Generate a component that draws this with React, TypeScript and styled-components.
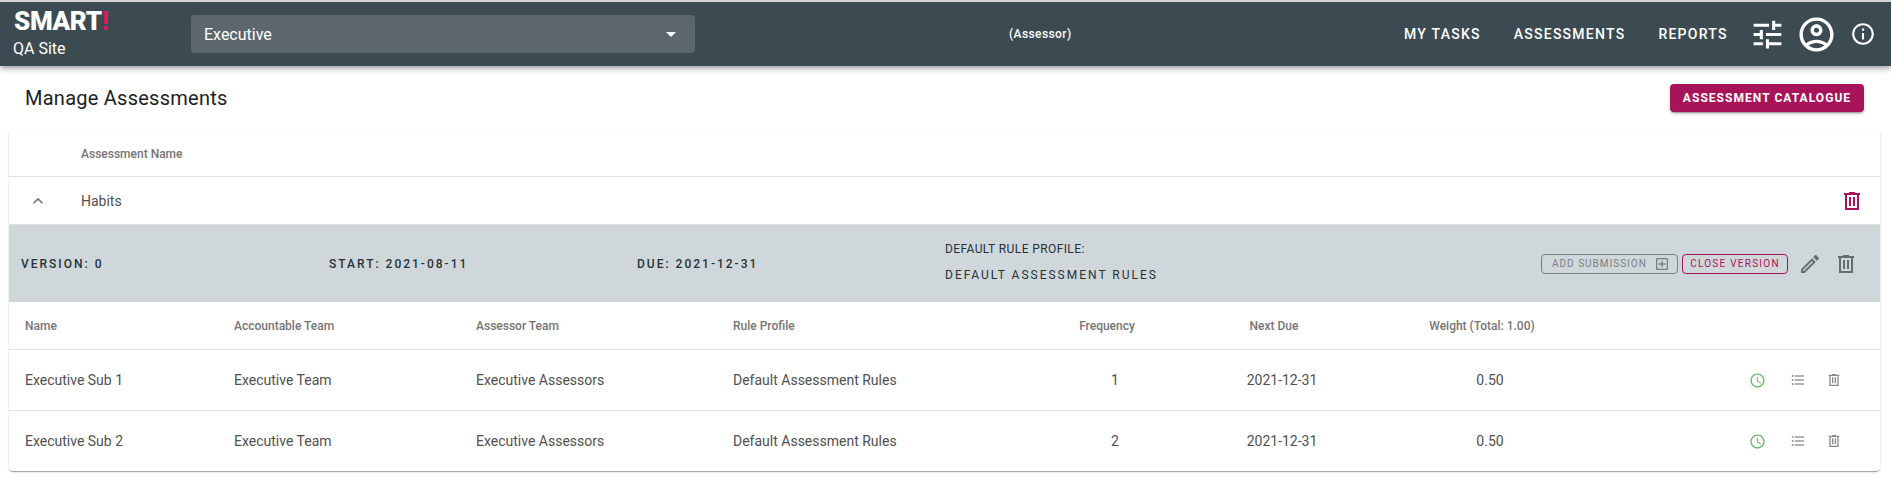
import styled, { createGlobalStyle } from "styled-components";

const GlobalStyle = createGlobalStyle`
  html, body {
    margin: 0;
    padding: 0;
    background: #fff;
    font-family: Roboto, "Liberation Sans", sans-serif;
  }
`;

const paths = {
  tune: "M3 17v2h6v-2H3zM3 5v2h10V5H3zm10 16v-2h8v-2h-8v-2h-2v6h2zM7 9v2H3v2h4v2h2V9H7zm14 4v-2H11v2h10zm-6-4h2V7h4V5h-4V3h-2v6z",
  account:
    "M12 2C6.48 2 2 6.48 2 12s4.48 10 10 10 10-4.48 10-10S17.52 2 12 2zM7.35 18.5C8.66 17.56 10.26 17 12 17s3.34.56 4.65 1.5c-1.31.94-2.91 1.5-4.65 1.5s-3.34-.56-4.65-1.5zm10.79-1.38C16.45 15.8 14.32 15 12 15s-4.45.8-6.14 2.12C4.7 15.73 4 13.95 4 12c0-4.42 3.58-8 8-8s8 3.58 8 8c0 1.95-.7 3.73-1.86 5.12zM12 6c-1.93 0-3.5 1.57-3.5 3.5S10.07 13 12 13s3.5-1.57 3.5-3.5S13.93 6 12 6zm0 5c-.83 0-1.5-.67-1.5-1.5S11.17 8 12 8s1.5.67 1.5 1.5S12.83 11 12 11z",
  info: "M11 7h2v2h-2zm0 4h2v6h-2zm1-9C6.48 2 2 6.48 2 12s4.48 10 10 10 10-4.48 10-10S17.52 2 12 2zm0 18c-4.41 0-8-3.59-8-8s3.59-8 8-8 8 3.59 8 8-3.59 8-8 8z",
  trash: "M9 3v1H4v2h1v15h14V6h1V4h-5V3H9zM7 6h10v13H7V6zm2 2v9h2V8H9zm4 0v9h2V8h-2z",
  edit: "M14.06 9.02l.92.92L5.92 19H5v-.92l9.06-9.06M17.66 3c-.25 0-.51.1-.7.29l-1.83 1.83 3.75 3.75 1.83-1.83c.39-.39.39-1.02 0-1.41l-2.34-2.34c-.2-.2-.45-.29-.71-.29zm-3.6 3.19L3 17.25V21h3.75L17.81 9.94l-3.75-3.75z",
  clock:
    "M11.99 2C6.47 2 2 6.48 2 12s4.47 10 9.99 10C17.52 22 22 17.52 22 12S17.52 2 11.99 2zM12 20c-4.42 0-8-3.58-8-8s3.58-8 8-8 8 3.58 8 8-3.58 8-8 8zm.5-13H11v6l5.25 3.15.75-1.23-4.5-2.67z",
  list: "M4 10.5c-.83 0-1.5.67-1.5 1.5s.67 1.5 1.5 1.5 1.5-.67 1.5-1.5-.67-1.5-1.5-1.5zm0-6c-.83 0-1.5.67-1.5 1.5S3.17 7.5 4 7.5 5.5 6.83 5.5 6 4.83 4.5 4 4.5zm0 12c-.83 0-1.5.68-1.5 1.5s.68 1.5 1.5 1.5 1.5-.68 1.5-1.5-.67-1.5-1.5-1.5zM7 19h14v-2H7v2zm0-6h14v-2H7v2zm0-8v2h14V5H7z",
  chevron: "M12 8l-6 6 1.41 1.41L12 10.83l4.59 4.58L18 14z",
  addBox: "M19 3H5c-1.1 0-2 .9-2 2v14c0 1.1.9 2 2 2h14c1.1 0 2-.9 2-2V5c0-1.1-.9-2-2-2zm0 16H5V5h14v14zM11 17h2v-4h4v-2h-4V7h-2v4H7v2h4z",
};

type IconProps = {
  name: keyof typeof paths;
  size: number;
  color: string;
};

const Icon = ({ name, size, color }: IconProps) => (
  <svg width={size} height={size} viewBox="0 0 24 24" fill={color} style={{ display: "block", flex: "none" }}>
    <path d={paths[name]} />
  </svg>
);

const submissions = [
  { name: "Executive Sub 1", frequency: 1 },
  { name: "Executive Sub 2", frequency: 2 },
];

export default function App() {
  return (
    <Page>
      <GlobalStyle />
      <Header>
        <Brand>
          <Logo>
            SMART<Bang>!</Bang>
          </Logo>
          <SiteName>QA Site</SiteName>
        </Brand>
        <SiteSelect>
          Executive
          <SelectArrow />
        </SiteSelect>
        <RoleLabel>(Assessor)</RoleLabel>
        <Nav>
          <NavLink>MY TASKS</NavLink>
          <NavLink>ASSESSMENTS</NavLink>
          <NavLink>REPORTS</NavLink>
        </Nav>
        <HeaderIcons>
          <Icon name="tune" size={37} color="#fff" />
          <Icon name="account" size={41} color="#fff" />
          <InfoSlot>
            <Icon name="info" size={26} color="#fff" />
          </InfoSlot>
        </HeaderIcons>
      </Header>

      <TitleBar>
        <Title>Manage Assessments</Title>
        <CatalogueButton>ASSESSMENT CATALOGUE</CatalogueButton>
      </TitleBar>

      <Paper>
        <NameHead>Assessment Name</NameHead>
        <AssessmentRow>
          <Toggle>
            <Icon name="chevron" size={20} color="#6b7478" />
          </Toggle>
          <AssessmentName>Habits</AssessmentName>
          <Icon name="trash" size={24} color="#a8145a" />
        </AssessmentRow>

        <VersionBand>
          <VersionText>VERSION: 0</VersionText>
          <VersionText>START: 2021-08-11</VersionText>
          <VersionText>DUE: 2021-12-31</VersionText>
          <RuleProfile>
            <RuleCaption>DEFAULT RULE PROFILE:</RuleCaption>
            <RuleValue>DEFAULT ASSESSMENT RULES</RuleValue>
          </RuleProfile>
          <VersionActions>
            <AddButton>
              ADD SUBMISSION
              <Icon name="addBox" size={16} color="#7a8084" />
            </AddButton>
            <CloseButton>CLOSE VERSION</CloseButton>
            <EditSlot>
              <Icon name="edit" size={24} color="#666d71" />
            </EditSlot>
            <Icon name="trash" size={24} color="#666d71" />
          </VersionActions>
        </VersionBand>

        <SubHeadRow>
          <HeadCell>Name</HeadCell>
          <HeadCell>Accountable Team</HeadCell>
          <HeadCell>Assessor Team</HeadCell>
          <HeadCell>Rule Profile</HeadCell>
          <HeadCell $center>Frequency</HeadCell>
          <HeadCell $center>Next Due</HeadCell>
          <HeadCell $center>Weight (Total: 1.00)</HeadCell>
          <span />
        </SubHeadRow>

        {submissions.map((sub) => (
          <SubRow key={sub.name}>
            <Cell>{sub.name}</Cell>
            <Cell>Executive Team</Cell>
            <Cell>Executive Assessors</Cell>
            <Cell>Default Assessment Rules</Cell>
            <Cell $center>{sub.frequency}</Cell>
            <Cell $center>2021-12-31</Cell>
            <Cell $center>0.50</Cell>
            <RowActions>
              <ClockSlot>
                <Icon name="clock" size={17} color="#66bb6a" />
              </ClockSlot>
              <Icon name="list" size={16} color="#9a9a9a" />
              <Icon name="trash" size={16} color="#8a8a8a" />
            </RowActions>
          </SubRow>
        ))}
      </Paper>
    </Page>
  );
}

const Page = styled.div`
  width: 1891px;
  height: 492px;
  overflow: hidden;
  background: #fff;
  border-top: 2px solid #d2d2d2;
  box-sizing: border-box;
`;

const Header = styled.header`
  height: 64px;
  display: flex;
  align-items: center;
  background: #3c4a52;
  color: #fff;
  box-shadow: 0 2px 4px -1px rgba(0, 0, 0, 0.2), 0 4px 5px 0 rgba(0, 0, 0, 0.14), 0 1px 10px 0 rgba(0, 0, 0, 0.12);
  position: relative;
`;

const Brand = styled.div`
  width: 178px;
  padding-left: 13px;
  flex: none;
  display: flex;
  flex-direction: column;
`;

const Logo = styled.div`
  margin: -1px 0 0 1px;
  font-size: 26px;
  font-weight: 900;
  line-height: 26px;
  letter-spacing: -0.4px;
`;

const Bang = styled.span`
  color: #d81b60;
`;

const SiteName = styled.div`
  font-size: 16px;
  line-height: 20px;
  margin-top: 5px;
`;

const SiteSelect = styled.div`
  width: 504px;
  height: 38px;
  flex: none;
  display: flex;
  align-items: center;
  justify-content: space-between;
  box-sizing: border-box;
  padding: 0 19px 0 13px;
  border-radius: 4px;
  background: #5c676d;
  font-size: 16px;
`;

const SelectArrow = styled.span`
  width: 0;
  height: 0;
  border-left: 5px solid transparent;
  border-right: 5px solid transparent;
  border-top: 5px solid #fff;
`;

const RoleLabel = styled.div`
  width: 125px;
  margin-left: 314px;
  flex: none;
  font-size: 12px;
  font-weight: 500;
  letter-spacing: 0.4px;
`;

const Nav = styled.nav`
  margin-left: 270px;
  display: flex;
  gap: 33px;
  flex: none;
`;

const NavLink = styled.a`
  font-size: 14px;
  font-weight: 500;
  letter-spacing: 1.25px;
  white-space: nowrap;
`;

const HeaderIcons = styled.div`
  margin-left: 21px;
  display: flex;
  align-items: center;
  gap: 10px;
`;

const InfoSlot = styled.div`
  margin-left: 3px;
`;

const TitleBar = styled.div`
  height: 64px;
  display: flex;
  align-items: center;
  justify-content: space-between;
  box-sizing: border-box;
  padding: 0 27px 0 25px;
`;

const Title = styled.h1`
  margin: 0;
  font-size: 20px;
  font-weight: 400;
  letter-spacing: 0.25px;
  color: #212121;
`;

const CatalogueButton = styled.button`
  width: 194px;
  height: 28px;
  padding: 0;
  border: none;
  border-radius: 4px;
  background: #a8145a;
  color: #fff;
  font-family: inherit;
  font-size: 12px;
  font-weight: 700;
  letter-spacing: 1.05px;
  box-shadow: 0 3px 1px -2px rgba(0, 0, 0, 0.2), 0 2px 2px 0 rgba(0, 0, 0, 0.14), 0 1px 5px 0 rgba(0, 0, 0, 0.12);
`;

const Paper = styled.section`
  width: 1871px;
  margin-left: 9px;
  border-radius: 0 0 4px 4px;
  background: #fff;
  box-shadow: 0 2px 1px -1px rgba(0, 0, 0, 0.2), 0 1px 1px 0 rgba(0, 0, 0, 0.14), 0 1px 3px 0 rgba(0, 0, 0, 0.12);
`;

const NameHead = styled.div`
  height: 47px;
  box-sizing: border-box;
  display: flex;
  align-items: center;
  padding: 2px 0 0 72px;
  border-bottom: 1px solid #e0e0e0;
  font-size: 12px;
  font-weight: 500;
  color: #757575;
`;

const AssessmentRow = styled.div`
  height: 48px;
  box-sizing: border-box;
  display: flex;
  align-items: center;
  padding: 0 16px 0 19px;
  border-bottom: 1px solid #e0e0e0;
`;

const Toggle = styled.div`
  width: 53px;
  flex: none;
`;

const AssessmentName = styled.div`
  flex: 1;
  font-size: 14px;
  color: #505050;
`;

const VersionBand = styled.div`
  height: 77px;
  box-sizing: border-box;
  display: grid;
  grid-template-columns: 308px 308px 308px 1fr auto;
  align-items: center;
  padding: 0 22px 0 12px;
  background: #d0d7da;
`;

const VersionText = styled.div`
  font-size: 12px;
  font-weight: 500;
  letter-spacing: 2px;
  color: #263238;
`;

const RuleProfile = styled.div`
  display: flex;
  flex-direction: column;
  gap: 12px;
  padding-bottom: 3px;
`;

const RuleCaption = styled.div`
  font-size: 12px;
  letter-spacing: 0.4px;
  color: #263238;
`;

const RuleValue = styled.div`
  font-size: 12px;
  letter-spacing: 2px;
  color: #263238;
`;

const VersionActions = styled.div`
  display: flex;
  align-items: center;
  gap: 4px;
`;

const AddButton = styled.button`
  width: 137px;
  height: 20px;
  display: flex;
  align-items: center;
  justify-content: space-between;
  box-sizing: border-box;
  padding: 0 7px 0 10px;
  background: transparent;
  border: 1px solid #7a8084;
  border-radius: 4px;
  color: #7a8084;
  font-family: inherit;
  font-size: 10px;
  letter-spacing: 1px;
  white-space: nowrap;
`;

const CloseButton = styled.button`
  width: 106px;
  height: 20px;
  box-sizing: border-box;
  padding: 0;
  background: transparent;
  border: 1px solid #a8145a;
  border-radius: 4px;
  color: #a8145a;
  font-family: inherit;
  font-size: 10px;
  letter-spacing: 1.25px;
  white-space: nowrap;
`;

const EditSlot = styled.div`
  margin: 0 8px 0 6px;
`;

const rowColumns = "209px 242px 257px 300px 164px 170px 246px 1fr";

const SubHeadRow = styled.div`
  height: 48px;
  box-sizing: border-box;
  display: grid;
  grid-template-columns: ${rowColumns};
  align-items: center;
  padding-left: 16px;
  border-bottom: 1px solid #e0e0e0;
`;

const HeadCell = styled.div<{ $center?: boolean }>`
  font-size: 12px;
  font-weight: 500;
  color: #757575;
  text-align: ${(props) => (props.$center ? "center" : "left")};
  padding-right: ${(props) => (props.$center ? "16px" : "0")};
`;

const SubRow = styled.div`
  height: 61px;
  box-sizing: border-box;
  display: grid;
  grid-template-columns: ${rowColumns};
  align-items: center;
  padding-left: 16px;
  border-bottom: 1px solid #e0e0e0;

  &:last-child {
    height: 60px;
    border-bottom: none;
  }
`;

const Cell = styled.div<{ $center?: boolean }>`
  font-size: 14px;
  color: #505050;
  text-align: ${(props) => (props.$center ? "center" : "left")};
`;

const RowActions = styled.div`
  display: flex;
  align-items: center;
  justify-content: flex-end;
  gap: 20px;
  padding-right: 38px;
`;

const ClockSlot = styled.div`
  margin-right: 4px;
`;
